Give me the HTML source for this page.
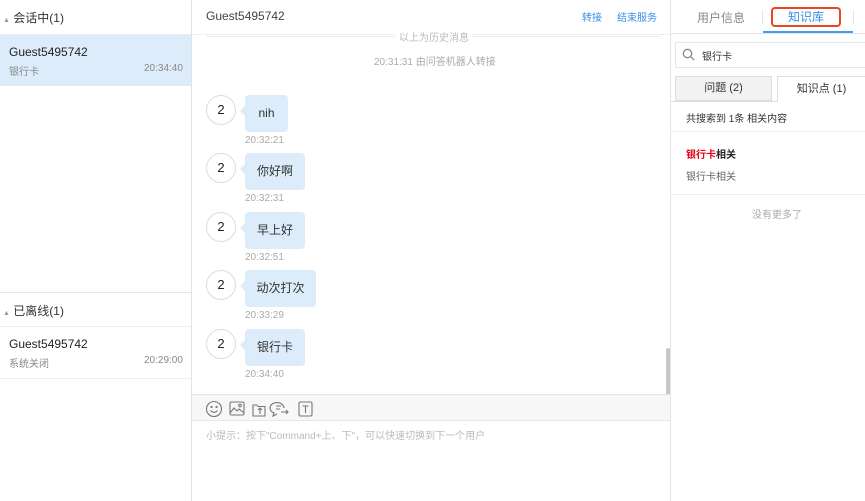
<!DOCTYPE html>
<html><head><meta charset="utf-8"><style>
*{margin:0;padding:0;box-sizing:border-box}
body{width:865px;height:501px;overflow:hidden;background:#fff;font-family:"Liberation Sans","Noto Sans CJK SC",sans-serif;color:#333;position:relative}
.a{position:absolute}
.t{font-size:11px;color:#999}
.av{position:absolute;left:206px;width:30px;height:30px;border-radius:50%;border:1px solid #ddd;background:#fff;font-size:13px;text-align:center;line-height:28px;color:#222}
.bb{position:absolute;left:245px;height:37px;background:#dcecfb;border-radius:4px;font-size:12px;line-height:37px;text-align:center;color:#333}
.bb:before{content:"";position:absolute;left:-5px;top:11px;border:5px solid transparent;border-left:0;border-right-color:#dcecfb}
.tm{position:absolute;left:245px;font-size:10px;color:#aaa}
</style></head><body>
<!-- left -->
<div class="a" style="left:191px;top:0;width:1px;height:501px;background:#e3e3e3"></div>
<div class="a" style="left:0;top:34px;width:191px;height:1px;background:#eee"></div>
<div class="a" style="left:3px;top:9px;font-size:12px;color:#333"><span style="font-size:7px;color:#999">▲</span> 会话中(1)</div>
<div class="a" style="left:0;top:35px;width:191px;height:51px;background:#dcecfb"></div>
<div class="a" style="left:9px;top:45px;font-size:12px;color:#222">Guest5495742</div>
<div class="a t" style="left:9px;top:63px;color:#888;font-size:10px">银行卡</div>
<div class="a t" style="left:144px;top:63px;color:#888;font-size:10px">20:34:40</div>
<div class="a" style="left:0;top:292px;width:191px;height:1px;background:#e6e6e6"></div>
<div class="a" style="left:0;top:326px;width:191px;height:1px;background:#eee"></div>
<div class="a" style="left:3px;top:302px;font-size:12px;color:#333"><span style="font-size:7px;color:#999">▲</span> 已离线(1)</div>
<div class="a" style="left:9px;top:337px;font-size:12px;color:#222">Guest5495742</div>
<div class="a t" style="left:9px;top:355px;color:#888;font-size:10px">系统关闭</div>
<div class="a t" style="left:144px;top:355px;color:#888;font-size:10px">20:29:00</div>
<div class="a" style="left:0;top:378px;width:191px;height:1px;background:#eee"></div>
<!-- middle -->
<div class="a" style="left:206px;top:9px;font-size:12px;color:#444">Guest5495742</div>
<div class="a" style="left:582px;top:9px;font-size:10px;color:#3a8ee6">转接</div>
<div class="a" style="left:617px;top:9px;font-size:10px;color:#3a8ee6">结束服务</div>
<div class="a" style="left:192px;top:34px;width:478px;height:1px;background:#eee"></div>
<div class="a" style="left:207px;top:36px;width:452px;border-top:1px dotted #ddd"></div>
<div class="a t" style="left:396px;top:29px;background:#fff;padding:0 3px;font-size:10px;color:#bbb">以上为历史消息</div>
<div class="a" style="left:374px;top:53px;font-size:10px;color:#aaa">20:31:31 由问答机器人转接</div>
<div class="av" style="top:95px">2</div><div class="bb" style="top:95px;width:43px">nih</div><div class="tm" style="top:135px">20:32:21</div>
<div class="av" style="top:153px">2</div><div class="bb" style="top:153px;width:60px">你好啊</div><div class="tm" style="top:193px">20:32:31</div>
<div class="av" style="top:212px">2</div><div class="bb" style="top:212px;width:60px">早上好</div><div class="tm" style="top:252px">20:32:51</div>
<div class="av" style="top:270px">2</div><div class="bb" style="top:270px;width:71px">动次打次</div><div class="tm" style="top:310px">20:33:29</div>
<div class="av" style="top:329px">2</div><div class="bb" style="top:329px;width:60px">银行卡</div><div class="tm" style="top:369px">20:34:40</div>
<div class="a" style="left:666px;top:348px;width:4px;height:47px;background:#c8c8c8;border-radius:2px"></div>
<div class="a" style="left:192px;top:394px;width:478px;height:27px;background:#f7f7f7;border-top:1px solid #e3e3e3;border-bottom:1px solid #e8e8e8"></div>
<svg class="a" style="left:205px;top:400px" width="115" height="18" fill="none" stroke="#777" stroke-width="1.1">
<circle cx="9" cy="9" r="7.5"/><circle cx="6.5" cy="7" r=".6" fill="#777"/><circle cx="11.5" cy="7" r=".6" fill="#777"/><path d="M5.5 10.5q3.5 3.5 7 0"/>
<rect x="25" y="2" width="14" height="13" rx="1.5"/><path d="M25 13l4-5 3 3 2-2 5 4"/><circle cx="35" cy="5.5" r="1.3"/>
<path d="M48 5h4l1 1.5h7v9.5h-12z"/><path d="M55 14v-6m-2 2l2-2 2 2"/>
<path d="M79 8a7 5.5 0 1 0-10 5l-1 3 4-2"/><path d="M71 6h5M71 9h4"/><path d="M76 12h7m-2-2l2 2-2 2"/>
<rect x="94" y="2" width="13" height="14" rx="1.5"/><path d="M97.5 6h6M100.5 6v7"/>
</svg>
<div class="a" style="left:206px;top:427px;font-size:10px;color:#bbb">小提示：按下"Command+上、下"，可以快速切换到下一个用户</div>
<!-- right -->
<div class="a" style="left:670px;top:0;width:1px;height:501px;background:#e3e3e3"></div>
<div class="a" style="left:697px;top:9px;font-size:12px;color:#888">用户信息</div>
<div class="a" style="left:762px;top:10px;width:1px;height:14px;background:#e6e6e6"></div>
<div class="a" style="left:853px;top:10px;width:1px;height:14px;background:#e6e6e6"></div>
<div class="a" style="left:771px;top:7px;width:70px;height:20px;border:2px solid #e8471f;border-radius:4px;font-size:12px;color:#3a8ee6;text-align:center;line-height:16px">知识库</div>
<div class="a" style="left:763px;top:31px;width:90px;height:2px;background:#4a9be8"></div>
<div class="a" style="left:671px;top:33px;width:194px;height:1px;background:#e6e6e6"></div>
<div class="a" style="left:675px;top:42px;width:190px;height:26px;border:1px solid #e6e6e6;border-right:0"></div>
<svg class="a" style="left:682px;top:48px" width="13" height="13" fill="none" stroke="#888" stroke-width="1.3"><circle cx="5.5" cy="5.5" r="4.2"/><path d="M8.6 8.6l3.5 3.5"/></svg>
<div class="a" style="left:702px;top:48px;font-size:10px;color:#333">银行卡</div>
<div class="a" style="left:675px;top:76px;width:97px;height:25px;background:#f2f2f2;border:1px solid #ddd;font-size:11px;text-align:center;line-height:23px;color:#333">问题 (2)</div>
<div class="a" style="left:777px;top:76px;width:88px;height:26px;background:#fff;border:1px solid #ddd;border-bottom:0;border-right:0;font-size:11px;text-align:center;line-height:25px;color:#333">知识点 (1)</div>
<div class="a" style="left:671px;top:101px;width:106px;height:1px;background:#ddd"></div>
<div class="a" style="left:686px;top:110px;font-size:10px;color:#333">共搜索到 1条 相关内容</div>
<div class="a" style="left:671px;top:131px;width:194px;height:1px;background:#eee"></div>
<div class="a" style="left:686px;top:146px;font-size:10px;font-weight:bold;color:#222"><span style="color:#e60012">银行卡</span>相关</div>
<div class="a" style="left:686px;top:168px;font-size:10px;color:#666">银行卡相关</div>
<div class="a" style="left:671px;top:194px;width:194px;height:1px;background:#eee"></div>
<div class="a" style="left:752px;top:206px;font-size:10px;color:#aaa">没有更多了</div>
</body></html>
